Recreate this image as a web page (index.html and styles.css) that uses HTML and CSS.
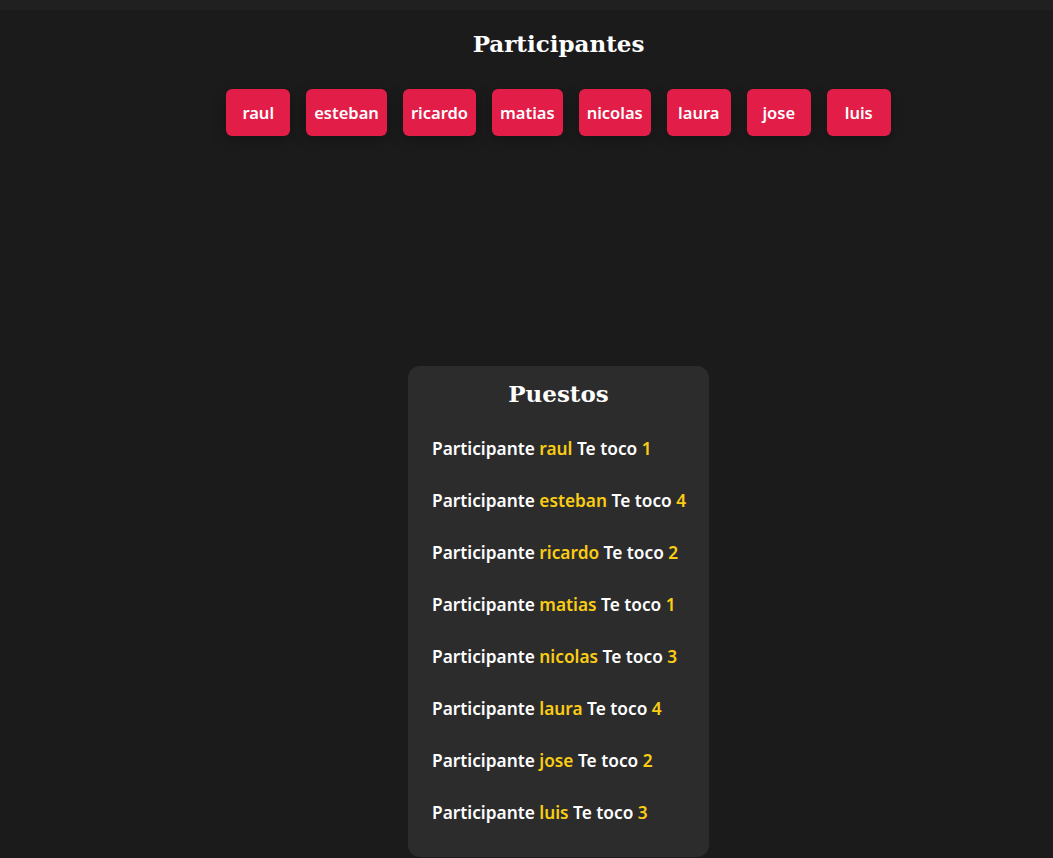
FILE: index.html
```html
<!DOCTYPE html>
<html lang="es">
<head>
<meta charset="utf-8">
<title>Participantes</title>
<link rel="stylesheet" href="styles.css">
</head>
<body>
<div class="topbar"></div>
<main class="main">
  <h2 class="title">Participantes</h2>
  <div class="chips">
    <button class="chip">raul</button>
    <button class="chip">esteban</button>
    <button class="chip">ricardo</button>
    <button class="chip">matias</button>
    <button class="chip">nicolas</button>
    <button class="chip">laura</button>
    <button class="chip">jose</button>
    <button class="chip">luis</button>
  </div>
  <div class="spacer"></div>
  <section class="card">
    <h2 class="card-title">Puestos</h2>
    <ul class="list">
      <li>Participante <span class="hl">raul</span> Te toco <span class="hl">1</span></li>
      <li>Participante <span class="hl">esteban</span> Te toco <span class="hl">4</span></li>
      <li>Participante <span class="hl">ricardo</span> Te toco <span class="hl">2</span></li>
      <li>Participante <span class="hl">matias</span> Te toco <span class="hl">1</span></li>
      <li>Participante <span class="hl">nicolas</span> Te toco <span class="hl">3</span></li>
      <li>Participante <span class="hl">laura</span> Te toco <span class="hl">4</span></li>
      <li>Participante <span class="hl">jose</span> Te toco <span class="hl">2</span></li>
      <li>Participante <span class="hl">luis</span> Te toco <span class="hl">3</span></li>
    </ul>
  </section>
</main>
</body>
</html>
```
FILE: styles.css
```css
html, body {
  margin: 0;
  padding: 0;
  background: #1b1b1b;
  color: #ffffff;
  font-family: "Noto Sans", "Open Sans", sans-serif;
}
.topbar {
  height: 10px;
  background: #202020;
}
.main {
  padding-left: 64px;
  display: flex;
  flex-direction: column;
  align-items: center;
}
.title {
  font-family: "DejaVu Serif", "Liberation Serif", serif;
  font-weight: bold;
  font-size: 23px;
  margin: 19px 0 0 0;
  line-height: 30px;
}
.chips {
  display: flex;
  gap: 16px;
  margin-top: 30px;
}
.chip {
  min-width: 64px;
  height: 47px;
  padding: 0 8px;
  border: none;
  border-radius: 6px;
  background: #e11d48;
  color: #fff;
  font-family: "Noto Sans", sans-serif;
  font-weight: 600;
  font-size: 16.5px;
  box-shadow: 0 4px 14px rgba(0,0,0,0.25);
}
.spacer {
  height: 230px;
}
.card {
  width: 301px;
  box-sizing: border-box;
  background: #2c2c2c;
  border-radius: 12px;
  padding: 12px 24px 32px;
}
.card-title {
  font-family: "DejaVu Serif", "Liberation Serif", serif;
  font-weight: bold;
  font-size: 23px;
  text-align: center;
  margin: 0;
  line-height: 32px;
}
.list {
  list-style: none;
  margin: 27px 0 0;
  padding: 0;
}
.list li {
  font-weight: 600;
  font-size: 17.3px;
  line-height: 24px;
  margin-bottom: 28px;
  white-space: nowrap;
}
.list li:last-child { margin-bottom: 0; }
.hl {
  color: #facc15;
}
```
